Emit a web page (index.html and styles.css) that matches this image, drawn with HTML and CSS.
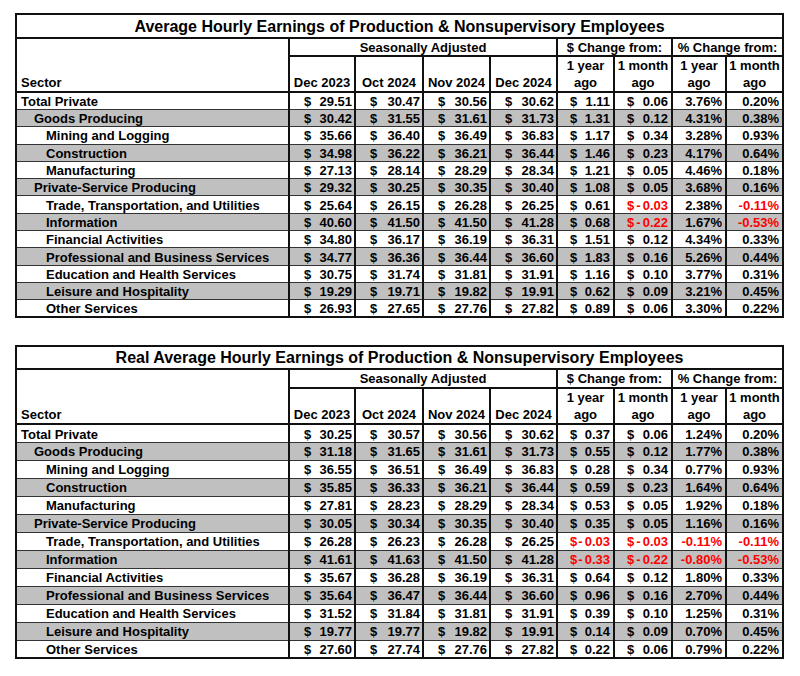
FILE: index.html
```html
<!DOCTYPE html>
<html>
<head>
<meta charset="utf-8">
<link rel="stylesheet" href="styles.css">
</head>
<body>
<div class="page">
<table class="tbl t1">
<colgroup><col class="c-sec"><col class="c-d23"><col class="c-o24"><col class="c-n24"><col class="c-d24"><col class="c-y"><col class="c-m"><col class="c-py"><col class="c-pm"></colgroup>
<tr class="r-title"><th colspan="9" class="title">Average Hourly Earnings of Production &amp; Nonsupervisory Employees</th></tr>
<tr class="r-grp"><th rowspan="2" class="sec-h">Sector</th><th colspan="4">Seasonally Adjusted</th><th colspan="2">$ Change from:</th><th colspan="2">% Change from:</th></tr>
<tr class="r-head"><th>Dec 2023</th><th>Oct 2024</th><th>Nov 2024</th><th>Dec 2024</th><th>1 year<br>ago</th><th>1 month<br>ago</th><th>1 year<br>ago</th><th>1 month<br>ago</th></tr>
<tr><td class="l0">Total Private</td><td class="m"><i>$</i>29.51</td><td class="m"><i>$</i>30.47</td><td class="m"><i>$</i>30.56</td><td class="m"><i>$</i>30.62</td><td class="c"><i>$</i>1.11</td><td class="c"><i>$</i>0.06</td><td class="p">3.76%</td><td class="p">0.20%</td></tr>
<tr class="g"><td class="l1">Goods Producing</td><td class="m"><i>$</i>30.42</td><td class="m"><i>$</i>31.55</td><td class="m"><i>$</i>31.61</td><td class="m"><i>$</i>31.73</td><td class="c"><i>$</i>1.31</td><td class="c"><i>$</i>0.12</td><td class="p">4.31%</td><td class="p">0.38%</td></tr>
<tr><td class="l2">Mining and Logging</td><td class="m"><i>$</i>35.66</td><td class="m"><i>$</i>36.40</td><td class="m"><i>$</i>36.49</td><td class="m"><i>$</i>36.83</td><td class="c"><i>$</i>1.17</td><td class="c"><i>$</i>0.34</td><td class="p">3.28%</td><td class="p">0.93%</td></tr>
<tr class="g"><td class="l2">Construction</td><td class="m"><i>$</i>34.98</td><td class="m"><i>$</i>36.22</td><td class="m"><i>$</i>36.21</td><td class="m"><i>$</i>36.44</td><td class="c"><i>$</i>1.46</td><td class="c"><i>$</i>0.23</td><td class="p">4.17%</td><td class="p">0.64%</td></tr>
<tr><td class="l2">Manufacturing</td><td class="m"><i>$</i>27.13</td><td class="m"><i>$</i>28.14</td><td class="m"><i>$</i>28.29</td><td class="m"><i>$</i>28.34</td><td class="c"><i>$</i>1.21</td><td class="c"><i>$</i>0.05</td><td class="p">4.46%</td><td class="p">0.18%</td></tr>
<tr class="g"><td class="l1">Private-Service Producing</td><td class="m"><i>$</i>29.32</td><td class="m"><i>$</i>30.25</td><td class="m"><i>$</i>30.35</td><td class="m"><i>$</i>30.40</td><td class="c"><i>$</i>1.08</td><td class="c"><i>$</i>0.05</td><td class="p">3.68%</td><td class="p">0.16%</td></tr>
<tr><td class="l2">Trade, Transportation, and Utilities</td><td class="m"><i>$</i>25.64</td><td class="m"><i>$</i>26.15</td><td class="m"><i>$</i>26.28</td><td class="m"><i>$</i>26.25</td><td class="c"><i>$</i>0.61</td><td class="c neg"><i>$</i>- 0.03</td><td class="p">2.38%</td><td class="p neg">-0.11%</td></tr>
<tr class="g"><td class="l2">Information</td><td class="m"><i>$</i>40.60</td><td class="m"><i>$</i>41.50</td><td class="m"><i>$</i>41.50</td><td class="m"><i>$</i>41.28</td><td class="c"><i>$</i>0.68</td><td class="c neg"><i>$</i>- 0.22</td><td class="p">1.67%</td><td class="p neg">-0.53%</td></tr>
<tr><td class="l2">Financial Activities</td><td class="m"><i>$</i>34.80</td><td class="m"><i>$</i>36.17</td><td class="m"><i>$</i>36.19</td><td class="m"><i>$</i>36.31</td><td class="c"><i>$</i>1.51</td><td class="c"><i>$</i>0.12</td><td class="p">4.34%</td><td class="p">0.33%</td></tr>
<tr class="g"><td class="l2">Professional and Business Services</td><td class="m"><i>$</i>34.77</td><td class="m"><i>$</i>36.36</td><td class="m"><i>$</i>36.44</td><td class="m"><i>$</i>36.60</td><td class="c"><i>$</i>1.83</td><td class="c"><i>$</i>0.16</td><td class="p">5.26%</td><td class="p">0.44%</td></tr>
<tr><td class="l2">Education and Health Services</td><td class="m"><i>$</i>30.75</td><td class="m"><i>$</i>31.74</td><td class="m"><i>$</i>31.81</td><td class="m"><i>$</i>31.91</td><td class="c"><i>$</i>1.16</td><td class="c"><i>$</i>0.10</td><td class="p">3.77%</td><td class="p">0.31%</td></tr>
<tr class="g"><td class="l2">Leisure and Hospitality</td><td class="m"><i>$</i>19.29</td><td class="m"><i>$</i>19.71</td><td class="m"><i>$</i>19.82</td><td class="m"><i>$</i>19.91</td><td class="c"><i>$</i>0.62</td><td class="c"><i>$</i>0.09</td><td class="p">3.21%</td><td class="p">0.45%</td></tr>
<tr><td class="l2">Other Services</td><td class="m"><i>$</i>26.93</td><td class="m"><i>$</i>27.65</td><td class="m"><i>$</i>27.76</td><td class="m"><i>$</i>27.82</td><td class="c"><i>$</i>0.89</td><td class="c"><i>$</i>0.06</td><td class="p">3.30%</td><td class="p">0.22%</td></tr>
</table>

<table class="tbl t2">
<colgroup><col class="c-sec"><col class="c-d23"><col class="c-o24"><col class="c-n24"><col class="c-d24"><col class="c-y"><col class="c-m"><col class="c-py"><col class="c-pm"></colgroup>
<tr class="r-title"><th colspan="9" class="title">Real Average Hourly Earnings of Production &amp; Nonsupervisory Employees</th></tr>
<tr class="r-grp"><th rowspan="2" class="sec-h">Sector</th><th colspan="4">Seasonally Adjusted</th><th colspan="2">$ Change from:</th><th colspan="2">% Change from:</th></tr>
<tr class="r-head"><th>Dec 2023</th><th>Oct 2024</th><th>Nov 2024</th><th>Dec 2024</th><th>1 year<br>ago</th><th>1 month<br>ago</th><th>1 year<br>ago</th><th>1 month<br>ago</th></tr>
<tr><td class="l0">Total Private</td><td class="m"><i>$</i>30.25</td><td class="m"><i>$</i>30.57</td><td class="m"><i>$</i>30.56</td><td class="m"><i>$</i>30.62</td><td class="c"><i>$</i>0.37</td><td class="c"><i>$</i>0.06</td><td class="p">1.24%</td><td class="p">0.20%</td></tr>
<tr class="g"><td class="l1">Goods Producing</td><td class="m"><i>$</i>31.18</td><td class="m"><i>$</i>31.65</td><td class="m"><i>$</i>31.61</td><td class="m"><i>$</i>31.73</td><td class="c"><i>$</i>0.55</td><td class="c"><i>$</i>0.12</td><td class="p">1.77%</td><td class="p">0.38%</td></tr>
<tr><td class="l2">Mining and Logging</td><td class="m"><i>$</i>36.55</td><td class="m"><i>$</i>36.51</td><td class="m"><i>$</i>36.49</td><td class="m"><i>$</i>36.83</td><td class="c"><i>$</i>0.28</td><td class="c"><i>$</i>0.34</td><td class="p">0.77%</td><td class="p">0.93%</td></tr>
<tr class="g"><td class="l2">Construction</td><td class="m"><i>$</i>35.85</td><td class="m"><i>$</i>36.33</td><td class="m"><i>$</i>36.21</td><td class="m"><i>$</i>36.44</td><td class="c"><i>$</i>0.59</td><td class="c"><i>$</i>0.23</td><td class="p">1.64%</td><td class="p">0.64%</td></tr>
<tr><td class="l2">Manufacturing</td><td class="m"><i>$</i>27.81</td><td class="m"><i>$</i>28.23</td><td class="m"><i>$</i>28.29</td><td class="m"><i>$</i>28.34</td><td class="c"><i>$</i>0.53</td><td class="c"><i>$</i>0.05</td><td class="p">1.92%</td><td class="p">0.18%</td></tr>
<tr class="g"><td class="l1">Private-Service Producing</td><td class="m"><i>$</i>30.05</td><td class="m"><i>$</i>30.34</td><td class="m"><i>$</i>30.35</td><td class="m"><i>$</i>30.40</td><td class="c"><i>$</i>0.35</td><td class="c"><i>$</i>0.05</td><td class="p">1.16%</td><td class="p">0.16%</td></tr>
<tr><td class="l2">Trade, Transportation, and Utilities</td><td class="m"><i>$</i>26.28</td><td class="m"><i>$</i>26.23</td><td class="m"><i>$</i>26.28</td><td class="m"><i>$</i>26.25</td><td class="c neg"><i>$</i>- 0.03</td><td class="c neg"><i>$</i>- 0.03</td><td class="p neg">-0.11%</td><td class="p neg">-0.11%</td></tr>
<tr class="g"><td class="l2">Information</td><td class="m"><i>$</i>41.61</td><td class="m"><i>$</i>41.63</td><td class="m"><i>$</i>41.50</td><td class="m"><i>$</i>41.28</td><td class="c neg"><i>$</i>- 0.33</td><td class="c neg"><i>$</i>- 0.22</td><td class="p neg">-0.80%</td><td class="p neg">-0.53%</td></tr>
<tr><td class="l2">Financial Activities</td><td class="m"><i>$</i>35.67</td><td class="m"><i>$</i>36.28</td><td class="m"><i>$</i>36.19</td><td class="m"><i>$</i>36.31</td><td class="c"><i>$</i>0.64</td><td class="c"><i>$</i>0.12</td><td class="p">1.80%</td><td class="p">0.33%</td></tr>
<tr class="g"><td class="l2">Professional and Business Services</td><td class="m"><i>$</i>35.64</td><td class="m"><i>$</i>36.47</td><td class="m"><i>$</i>36.44</td><td class="m"><i>$</i>36.60</td><td class="c"><i>$</i>0.96</td><td class="c"><i>$</i>0.16</td><td class="p">2.70%</td><td class="p">0.44%</td></tr>
<tr><td class="l2">Education and Health Services</td><td class="m"><i>$</i>31.52</td><td class="m"><i>$</i>31.84</td><td class="m"><i>$</i>31.81</td><td class="m"><i>$</i>31.91</td><td class="c"><i>$</i>0.39</td><td class="c"><i>$</i>0.10</td><td class="p">1.25%</td><td class="p">0.31%</td></tr>
<tr class="g"><td class="l2">Leisure and Hospitality</td><td class="m"><i>$</i>19.77</td><td class="m"><i>$</i>19.77</td><td class="m"><i>$</i>19.82</td><td class="m"><i>$</i>19.91</td><td class="c"><i>$</i>0.14</td><td class="c"><i>$</i>0.09</td><td class="p">0.70%</td><td class="p">0.45%</td></tr>
<tr><td class="l2">Other Services</td><td class="m"><i>$</i>27.60</td><td class="m"><i>$</i>27.74</td><td class="m"><i>$</i>27.76</td><td class="m"><i>$</i>27.82</td><td class="c"><i>$</i>0.22</td><td class="c"><i>$</i>0.06</td><td class="p">0.79%</td><td class="p">0.22%</td></tr>
</table>
</div>
</body>
</html>
```

FILE: styles.css
```css
html, body {
  margin: 0;
  padding: 0;
  background: #fff;
}
.page {
  padding: 13px 0 0 15px;
  font-family: "Liberation Sans", Arial, sans-serif;
  font-weight: bold;
  font-size: 13px;
  color: #000;
}
.tbl {
  border-collapse: collapse;
  table-layout: fixed;
  width: 769px;
  border: 2px solid #111;
}
.t2 {
  margin-top: 27px;
  width: 767px;
}
.c-sec { width: 273px; }
.c-d23 { width: 66px; }
.c-o24 { width: 68px; }
.c-n24 { width: 67px; }
.c-d24 { width: 67px; }
.c-y { width: 57px; }
.c-m { width: 58px; }
.c-py { width: 54px; }
.c-pm { width: 57px; }
.tbl th, .tbl td {
  padding: 0;
  white-space: nowrap;
  overflow: hidden;
  border-left: 2px solid #111;
  border-right: 2px solid #111;
  border-top: 1px solid #333;
  border-bottom: 1px solid #333;
  line-height: 15px;
}
.tbl th {
  font-weight: bold;
  text-align: center;
  border-bottom: 2px solid #111;
  border-top: 2px solid #111;
}
.title {
  font-size: 16px;
  padding-top: 3px;
}
.t1 .r-title { height: 24px; }
.t1 .r-grp { height: 18px; }
.t1 .r-head { height: 35px; }
.t1 tr { height: 17.3px; }
.t2 .r-title { height: 23px; }
.t2 .r-grp { height: 19px; }
.t2 .r-head { height: 36px; }
.t2 tr { height: 18px; }
.r-grp th { vertical-align: middle; }
.r-head th {
  vertical-align: bottom;
  line-height: 17px;
  padding-bottom: 0;
}
.r-grp .sec-h {
  text-align: left;
  vertical-align: bottom;
  padding-left: 4px;
  padding-bottom: 1px;
}
.tbl td { vertical-align: middle; padding-top: 1px; }
.g td { background: #c0c0c0; }
.l0 { padding-left: 4px !important; }
.l1 { padding-left: 17px !important; }
.l2 { padding-left: 29px !important; }
.m {
  text-align: right;
  padding-left: 14px !important;
  padding-right: 2px !important;
}
.c {
  text-align: right;
  padding-left: 12px !important;
  padding-right: 3px !important;
}
.p {
  text-align: right;
  padding-right: 3px !important;
}
.tbl i {
  font-style: normal;
  float: left;
}
.neg {
  color: #f00;
  word-spacing: -1.5px;
}
```
